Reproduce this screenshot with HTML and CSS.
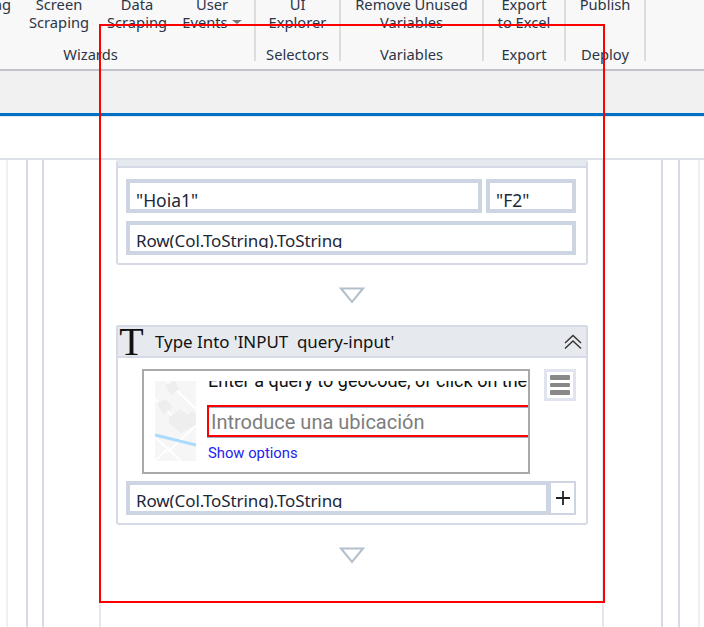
FILE: index.html
```html
<!DOCTYPE html>
<html lang="en">

<head>
  <meta charset="UTF-8" />
  <meta name="viewport" content="width=device-width, initial-scale=1.0" />
  <title>Type Into</title>
  <link rel="stylesheet" href="styles.css">
</head>

<body>
  <div class="ribbon">
    <div class="group group-wizards">
      <div class="tools">
        <div class="tool tool-record">Recording</div>
        <div class="tool tool-screen">Screen<br>Scraping</div>
        <div class="tool tool-data">Data<br>Scraping</div>
        <div class="tool tool-events">User<br>Events<span class="caret"></span></div>
      </div>
      <div class="group-label">Wizards</div>
    </div>
    <div class="group group-selectors">
      <div class="tools">
        <div class="tool">UI<br>Explorer</div>
      </div>
      <div class="group-label">Selectors</div>
    </div>
    <div class="group group-variables">
      <div class="tools">
        <div class="tool">Remove Unused<br>Variables</div>
      </div>
      <div class="group-label">Variables</div>
    </div>
    <div class="group group-export">
      <div class="tools">
        <div class="tool">Export<br>to Excel</div>
      </div>
      <div class="group-label">Export</div>
    </div>
    <div class="group group-deploy">
      <div class="tools">
        <div class="tool">Publish<br>&nbsp;</div>
      </div>
      <div class="group-label">Deploy</div>
    </div>
  </div>

  <div class="tabbar"></div>

  <div class="canvas">
    <div class="scope scope-1">
      <div class="scope scope-2">
        <div class="scope scope-3">
          <div class="scope scope-4">

            <div class="card">
              <div class="card-stub"></div>
              <div class="card-body card-body-first">
                <div class="field-row">
                  <div class="field field-grow"><div class="field-literal">"Hoja1"</div></div>
                  <div class="field field-cell"><div class="field-literal">"F2"</div></div>
                </div>
                <div class="field"><div class="field-text">Row(Col.ToString).ToString</div></div>
              </div>
            </div>

            <div class="connector">
              <svg width="26" height="17" viewBox="0 0 26 17">
                <path d="M2 1.5 H24 L13 15 Z" fill="#fff" stroke="#b4bfcc" stroke-width="2" />
              </svg>
            </div>

            <div class="card">
              <div class="card-head">
                <span class="card-icon">T</span>
                <span class="card-title">Type Into 'INPUT  query-input'</span>
                <svg class="collapse" width="18" height="18" viewBox="0 0 18 18">
                  <path d="M1 10 L9 2.5 L17 10 M1 15.5 L9 8 L17 15.5" fill="none" stroke="#333" stroke-width="1.4" />
                </svg>
              </div>
              <div class="card-body">
                <div class="capture-row">
                  <div class="capture">
                    <svg class="map" width="41" height="80" viewBox="0 0 41 80">
                      <rect width="41" height="80" fill="#f6f6f6" />
                      <path d="M0 18 L22 40 M12 0 L41 28 M0 56 L26 80 M14 66 L0 80 M41 44 L12 72" stroke="#fff" stroke-width="2" fill="none" />
                      <path d="M2 22 L11 18 L18 26 L8 34 Z M14 36 L26 28 L32 34 L38 30 L41 34 L41 44 L26 52 L14 42 Z M10 4 L20 0 L24 8 L16 14 Z" fill="#eeeeee" />
                      <path d="M0 54 L41 64" stroke="#aadafc" stroke-width="3" fill="none" />
                    </svg>
                    <div class="capture-main">
                      <div class="capture-hint">Enter a query to geocode, or click on the</div>
                      <div class="capture-input">Introduce una ubicación</div>
                      <div class="capture-link">Show options</div>
                    </div>
                  </div>
                  <div class="menu-btn"><i></i><i></i><i></i></div>
                </div>
                <div class="field-add">
                  <div class="field-add-box"><div class="field-text">Row(Col.ToString).ToString</div></div>
                  <div class="add-btn">
                    <svg width="14" height="14" viewBox="0 0 14 14">
                      <path d="M7 0 V14 M0 7 H14" stroke="#222" stroke-width="1.8" fill="none" />
                    </svg>
                  </div>
                </div>
              </div>
            </div>

            <div class="connector">
              <svg width="26" height="17" viewBox="0 0 26 17">
                <path d="M2 1.5 H24 L13 15 Z" fill="#fff" stroke="#b4bfcc" stroke-width="2" />
              </svg>
            </div>

          </div>
        </div>
      </div>
    </div>
  </div>

  <div class="highlight"></div>
</body>

</html>
```

FILE: styles.css
```css
html, body {
  height: 100%;
}
body {
  margin: 0;
  height: 627px;
  overflow: hidden;
  background: white;
  font-family: 'Noto Sans', sans-serif;
  color: #111;
  position: relative;
}

/* ribbon */
.ribbon {
  display: flex;
  height: 69px;
  background: #f8f8f8;
  border-bottom: 2px solid #c0c4c8;
  overflow: hidden;
}
.group {
  flex: none;
  box-sizing: border-box;
  height: 61px;
  border-right: 2px solid #dcdcdc;
  color: #2b3547;
  font-size: 14.7px;
}
.group-wizards { width: 329px; margin-left: -73px; }
.group-selectors { width: 85px; }
.group-variables { width: 143px; }
.group-export { width: 82px; }
.group-deploy { width: 80px; }
.tools {
  display: flex;
  justify-content: center;
  height: 36px;
  margin-top: -5px;
  line-height: 18px;
  text-align: center;
  white-space: nowrap;
}
.group-wizards .tools {
  justify-content: flex-start;
}
.tool-record { width: 84px; padding-right: 11px; text-align: right; }
.tool-screen { width: 74px; }
.tool-data { width: 82px; }
.tool-events { width: 68px; }
.caret {
  display: inline-block;
  width: 0;
  height: 0;
  margin-left: 4px;
  vertical-align: 4px;
  border-left: 5px solid transparent;
  border-right: 5px solid transparent;
  border-top: 4px solid #777;
}
.group-label {
  margin-top: 13px;
  line-height: 20px;
  text-align: center;
}

.tabbar {
  height: 42px;
  background: #f1f1f1;
  border-bottom: 3px solid #0070c6;
  box-shadow: 0 1px 0 #e8e8e8;
}

/* workflow canvas */
.canvas {
  margin-top: 42px;
  border-top: 2px solid #dde1ea;
}
.scope {
  box-sizing: border-box;
  height: 100%;
  border-left: 2px solid #d6dae6;
  border-right: 2px solid #d6dae6;
}
.scope-1 {
  margin: 0 4px 0 6px;
  height: 467px;
  border-color: #eef0f6;
  padding: 0 18px;
}
.scope-2 { padding: 0 15px 0 14px; }
.scope-3 { padding: 0 57px 0 55px; }
.scope-4 {
  padding: 0 14px 0 15px;
  border-color: #e4e7ef;
}

.card {
  border: 2px solid #d6dae6;
  border-top: 0;
  border-radius: 3px;
  background: white;
}
.card-stub {
  height: 6px;
  background: #e6e9ed;
  border-bottom: 2px solid #d6dae6;
}
.card-body {
  padding: 11px 10px 8px 8px;
}
.card-head {
  display: flex;
  align-items: center;
  height: 29px;
  background: #e6e9ed;
  border: 2px solid #d6dae6;
  margin: 0 -2px;
  border-radius: 3px 3px 0 0;
}
.card-icon {
  width: 27px;
  font-family: 'Liberation Serif', serif;
  font-size: 40px;
  line-height: 28px;
  color: #111;
  text-align: center;
}
.card-title {
  flex: 1;
  padding-left: 10px;
  padding-bottom: 1px;
  font-size: 16.9px;
  white-space: pre;
}
.collapse {
  margin-right: 4px;
}

.field-row {
  display: flex;
  gap: 4px;
  margin-bottom: 8px;
}
.field {
  box-sizing: border-box;
  height: 34px;
  padding: 0 6px;
  border: 4px solid #ced5e2;
  overflow: hidden;
  white-space: nowrap;
}
.field-grow { flex: 1; }
.field-cell { width: 90px; }
.field-text {
  height: 23px;
  overflow: hidden;
  font-size: 17px;
  letter-spacing: -0.1px;
  line-height: 31px;
  color: #1c2738;
  white-space: nowrap;
}
.field-literal {
  height: 24px;
  overflow: hidden;
  font-size: 17.5px;
  line-height: 34px;
  color: #1c2738;
}

.connector {
  display: flex;
  justify-content: center;
  align-items: center;
  height: 60px;
}

.capture-row {
  display: flex;
  align-items: flex-start;
  margin-left: 16px;
}
.capture {
  display: flex;
  box-sizing: border-box;
  width: 388px;
  height: 105px;
  padding: 10px 0 0 11px;
  border: 2px solid #a9a9a9;
  overflow: hidden;
  font-family: 'Roboto', sans-serif;
}
.map {
  flex: none;
}
.capture-main {
  flex: 1;
  margin-left: 11px;
  min-width: 0;
}
.capture-hint {
  height: 15px;
  padding-left: 1px;
  font-size: 18px;
  line-height: 0;
  color: #111;
  white-space: nowrap;
  overflow: hidden;
}
.capture-input {
  box-sizing: border-box;
  height: 32px;
  margin-top: 9px;
  padding-left: 2px;
  border: 2px solid #f00;
  border-right: 0;
  box-shadow: inset 0 1px 0 #a0a8c8, 0 1px 0 #a0a8c8;
  font-size: 20px;
  line-height: 30px;
  color: #7d7d7d;
  white-space: nowrap;
}
.capture-link {
  margin-top: 7px;
  padding-left: 1px;
  font-size: 14.8px;
  line-height: 18px;
  color: #2222ee;
}

.menu-btn {
  display: flex;
  flex-direction: column;
  gap: 3px;
  box-sizing: border-box;
  width: 32px;
  height: 32px;
  margin-left: 14px;
  padding: 3px;
  border: 3px solid #e0e4ee;
}
.menu-btn i {
  display: block;
  height: 5px;
  background: #888;
  border-radius: 1px;
}

.field-add {
  display: flex;
  box-sizing: border-box;
  height: 34px;
  margin-top: 7px;
  border: 2px solid #ced5e2;
  background: #ced5e2;
}
.field-add-box {
  flex: 1;
  margin: 2px 5px 2px 2px;
  padding: 0 6px;
  background: white;
  overflow: hidden;
}
.add-btn {
  display: flex;
  align-items: center;
  justify-content: center;
  width: 23px;
  background: white;
}

/* annotation drawn over the screenshot */
.highlight {
  position: absolute;
  left: 99px;
  top: 24px;
  width: 502px;
  height: 575px;
  border: 2px solid #f00;
}
```
